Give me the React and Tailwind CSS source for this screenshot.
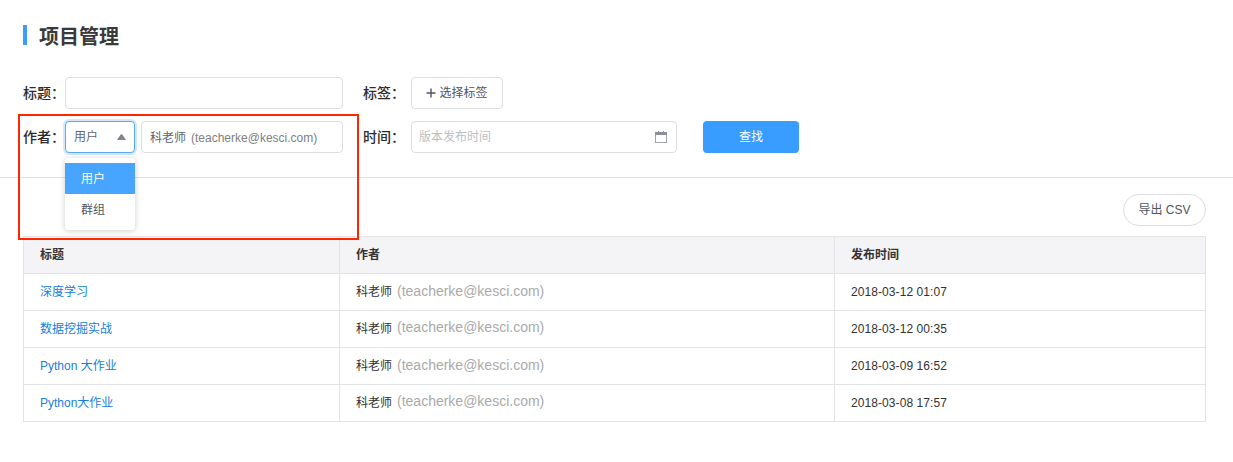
import React from 'react';

const rows = [
  { title: '深度学习', time: '2018-03-12 01:07', lift: 'pb-0.5' },
  { title: '数据挖掘实战', time: '2018-03-12 00:35', lift: 'pb-1' },
  { title: 'Python 大作业', time: '2018-03-09 16:52', lift: 'pb-0.5' },
  { title: 'Python大作业', time: '2018-03-08 17:57', lift: 'pb-1' },
];

const EMAIL = '(teacherke@kesci.com)';

function Label({ children }) {
  return <span className="shrink-0 text-sm font-medium whitespace-nowrap text-[#2b2b2b]">{children}</span>;
}

function CalendarIcon() {
  return (
    <svg width="12" height="12" viewBox="0 0 12 12" shapeRendering="crispEdges">
      <path d="M0 1h12v3H0z" fill="#8a8f9b" />
      <path d="M3 0h1v2H3zM8 0h1v2H8z" fill="#8a8f9b" />
      <path d="M.5 3.5v8h11v-8" fill="none" stroke="#a0a4ae" />
    </svg>
  );
}

function AuthorSelect() {
  return (
    <div className="relative h-8 w-[70px] shrink-0">
      <div className="flex h-8 w-[70px] items-center justify-between rounded border border-[#57a8fb] bg-white pr-2 pl-2 text-xs text-[#60646f] shadow-[0_0_0_2px_rgba(45,140,240,0.2)]">
        <span>用户</span>
        <svg width="9" height="6" viewBox="0 0 9 6">
          <path d="M0 6L3.9.3h1.2L9 6z" fill="#80848f" />
        </svg>
      </div>
      <ul className="absolute top-[37px] left-0 z-10 w-[70px] rounded bg-white pt-[5px] pb-[5px] text-xs shadow-[0_1px_6px_rgba(0,0,0,0.2)]">
        <li className="flex h-[31px] items-center bg-[#47a4ff] pl-4 text-white">用户</li>
        <li className="flex h-[31px] items-center pl-4 text-[#50545f]">群组</li>
      </ul>
    </div>
  );
}

export default function App() {
  return (
    <div className="relative h-[462px] w-[1233px] overflow-hidden bg-white font-['Liberation_Sans','Noto_Sans_CJK_SC',sans-serif] text-xs text-[#333333]">
      <header className="flex h-[70px] items-center pl-[23px]">
        <span className="h-5 w-1 bg-[#389dff]" />
        <h1 className="ml-3 pt-[3px] text-xl font-bold text-[#3a3a3a]">项目管理</h1>
      </header>

      <section className="flex h-[108px] flex-col gap-3 border-b border-[#e1e1e1] pt-[7px] pl-[23px]">
        <div className="flex h-8 items-center">
          <Label>标题：</Label>
          <div className="h-8 w-[278px] rounded border border-[#dddee1]" />
          <div className="ml-5 flex w-12 items-center">
            <Label>标签：</Label>
          </div>
          <button className="flex h-8 w-[92px] items-center justify-center gap-[3px] rounded border border-[#dddee1] text-[#50545f]">
            <svg width="10" height="10" viewBox="0 0 10 10">
              <path d="M5 .5v9M.5 5h9" stroke="#50545f" strokeWidth="1.4" />
            </svg>
            选择标签
          </button>
        </div>
        <div className="flex h-8 items-center">
          <Label>作者：</Label>
          <AuthorSelect />
          <div className="ml-1.5 flex h-8 w-[202px] items-center rounded border border-[#dddee1] pt-0.5 pl-2 text-[#60646f]">
            <span>科老师</span>
            <span className="ml-[5px] text-[#808080]">{EMAIL}</span>
          </div>
          <div className="ml-5 flex w-12 items-center">
            <Label>时间：</Label>
          </div>
          <div className="flex h-8 w-[266px] items-center justify-between rounded border border-[#dddee1] pr-[9px] pl-[7px] text-[#bbbec4]">
            <span>版本发布时间</span>
            <CalendarIcon />
          </div>
          <button className="ml-[26px] flex h-8 w-24 items-center justify-center rounded bg-[#389dff] text-white">查找</button>
        </div>
      </section>

      <div className="flex justify-end pt-4 pr-[27px] pb-2.5">
        <button className="flex h-8 w-[83px] items-center justify-center rounded-full border border-[#dddee1] text-[#50545f]">
          导出 CSV
        </button>
      </div>

      <div className="ml-[23px] grid w-[1183px] grid-cols-[316px_495px_371px] border-t border-l border-[#e2e3e5]">
        {['标题', '作者', '发布时间'].map((name) => (
          <div key={name} className="flex h-[37px] items-center border-r border-b border-[#e2e3e5] bg-[#f4f4f6] pl-4 font-bold">
            {name}
          </div>
        ))}
        {rows.map((row) => (
          <React.Fragment key={row.title}>
            <div className="flex h-[37px] items-center border-r border-b border-[#e2e3e5] pl-4 text-[#1580e0]">{row.title}</div>
            <div className="flex h-[37px] items-center border-r border-b border-[#e2e3e5] pl-4">
              <span>科老师</span>
              <span className={`ml-[5px] text-sm text-[#aaaaaa] ${row.lift}`}>{EMAIL}</span>
            </div>
            <div className="flex h-[37px] items-center border-r border-b border-[#e2e3e5] pl-4 tracking-[0.08px]">{row.time}</div>
          </React.Fragment>
        ))}
      </div>

      <div className="pointer-events-none absolute top-[114px] left-[18px] z-20 h-[126px] w-[341px] border-2 border-[#ff2600]" />
    </div>
  );
}
